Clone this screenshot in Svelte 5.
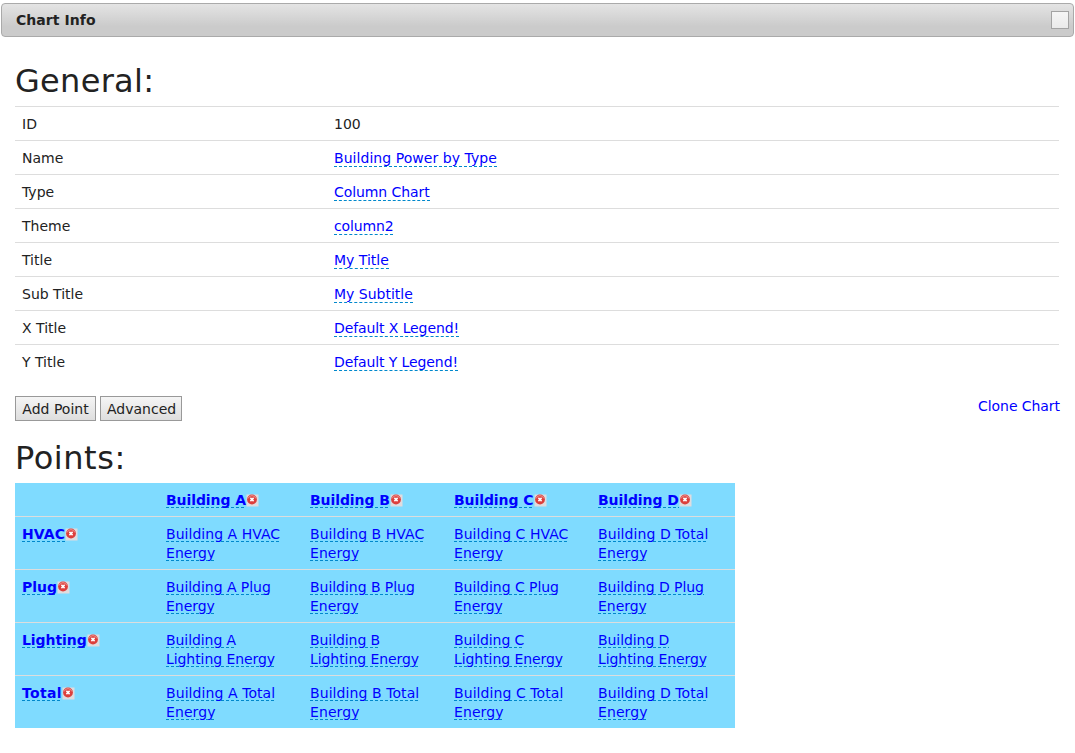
<script>
  const general = [
    ['ID', '100'],
    ['Name', 'Building Power by Type', 0.05],
    ['Type', 'Column Chart', -0.08],
    ['Theme', 'column2', -0.14],
    ['Title', 'My Title', 0],
    ['Sub Title', 'My Subtitle', 0],
    ['X Title', 'Default X Legend!', -0.1],
    ['Y Title', 'Default Y Legend!', -0.1]
  ];
  const columns = ['A', 'B', 'C', 'D'];
  const rows = [
    { name: 'HVAC', nameTracking: 0.1, tracking: 0.04, cells: ['HVAC', 'HVAC', 'HVAC', 'Total'] },
    { name: 'Plug', nameTracking: 0, tracking: -0.04, cells: ['Plug', 'Plug', 'Plug', 'Plug'] },
    { name: 'Lighting', nameTracking: -0.06, tracking: -0.07, cells: ['Lighting', 'Lighting', 'Lighting', 'Lighting'] },
    { name: 'Total', nameTracking: 0.3, tracking: 0.08, cells: ['Total', 'Total', 'Total', 'Total'] }
  ];
</script>

{#snippet remove()}
  <svg class="remove" width="13" height="13" viewBox="0 0 13 13">
    <rect x="0.5" y="0.5" width="12" height="12" fill="#dfdcdf" />
    <circle cx="6" cy="5.5" r="4.9" fill="#dc3f3c" />
    <path d="M2.2 4.4a4 4 0 0 1 7.6 0" fill="none" stroke="#ef9490" stroke-width="1" />
    <path d="M4.4 3.9l3.2 3.2M7.6 3.9L4.4 7.1" stroke="#fff" stroke-width="1.5" />
  </svg>
{/snippet}

<header class="titlebar">
  <span>Chart Info</span>
  <button class="close" aria-label="Close"></button>
</header>
<main>
  <h1>General:</h1>
  <div class="general">
    {#each general as [label, value, tracking], i}
      <div class="row">
        <span>{label}</span>
        <span>{#if i === 0}{value}{:else}<a class="edit" href="#edit" style:letter-spacing="{tracking}px">{value}</a>{/if}</span>
      </div>
    {/each}
  </div>
  <div class="actions">
    <button>Add Point</button>
    <button>Advanced</button>
    <a class="clone" href="#clone">Clone Chart</a>
  </div>
  <h1 class="second">Points:</h1>
  <div class="points">
    <div class="prow head">
      <div></div>
      {#each columns as c}
        <div><a class="edit" href="#edit">Building {c}</a>{@render remove()}</div>
      {/each}
    </div>
    {#each rows as row}
      <div class="prow">
        <div class="name"><a class="edit" href="#edit" style:letter-spacing="{row.nameTracking}px">{row.name}</a>{@render remove()}</div>
        {#each row.cells as cell, i}
          <div><a class="edit" href="#edit" style:letter-spacing="{cell === 'Total' ? 0.08 : row.tracking}px">Building {columns[i]} {cell} Energy</a></div>
        {/each}
      </div>
    {/each}
  </div>
</main>

<style>
  :global(body) {
    margin: 0;
    background: #fff;
    color: #222;
    font: 14px/19px Verdana, 'DejaVu Sans', sans-serif;
  }
  .titlebar {
    box-sizing: border-box;
    display: flex;
    align-items: center;
    justify-content: space-between;
    height: 34px;
    margin: 3px 1px 0;
    padding: 0 4px 0 14px;
    border: 1px solid #aaa;
    border-radius: 4px;
    background: linear-gradient(#e4e4e4, #cbcbcb 70%, #cbcbcb);
    font-weight: bold;
    letter-spacing: 0.05px;
  }
  .close {
    width: 18px;
    height: 18px;
    padding: 0;
    border: 1px solid #a3a3a3;
    background: linear-gradient(#f5f5f5, #eaeaea);
  }
  main {
    padding: 25px 15px 0;
  }
  h1 {
    margin: 0;
    height: 44px;
    line-height: 38px;
    font-size: 32px;
    font-weight: normal;
    letter-spacing: 0.3px;
  }
  .second {
    letter-spacing: 0.55px;
  }
  .general {
    width: 1044px;
  }
  .row {
    display: grid;
    grid-template-columns: 312px 1fr;
    box-sizing: border-box;
    height: 34px;
    padding: 8px 7px 0;
    border-top: 1px solid #ddd;
  }
  a {
    color: #00f;
    text-decoration: none;
  }
  .edit {
    border-bottom: 1px dashed #08c;
  }
  .points .edit {
    border-bottom: 0;
    background: repeating-linear-gradient(90deg, #08c 0 3px, transparent 3px 5px) left bottom / 100% 1px no-repeat;
    -webkit-box-decoration-break: clone;
    box-decoration-break: clone;
  }
  .actions {
    display: flex;
    gap: 4px;
    height: 43px;
    margin-top: 18px;
  }
  .actions button {
    box-sizing: border-box;
    height: 25px;
    padding: 1px 6px 0;
    border: 1px solid #999;
    background: linear-gradient(#f5f5f5, #dedede);
    color: #222;
    font: inherit;
  }
  .actions button:first-child {
    width: 81px;
  }
  .actions button:nth-child(2) {
    width: 82px;
  }
  .clone {
    margin: 1px 0 0 auto;
    letter-spacing: -0.06px;
  }
  .points {
    width: 720px;
    background: #7fdbff;
  }
  .prow {
    display: grid;
    grid-template-columns: repeat(5, 144px);
    box-sizing: border-box;
    height: 53px;
    border-top: 1px solid #ddd;
  }
  .prow > div {
    padding: 8px 7px 0;
  }
  .head {
    height: 33px;
    border-top: 0;
    letter-spacing: -0.08px;
  }
  .head,
  .name {
    font-weight: bold;
  }
  .remove {
    display: inline-block;
    margin-left: 0.3px;
    vertical-align: -2px;
  }
</style>
